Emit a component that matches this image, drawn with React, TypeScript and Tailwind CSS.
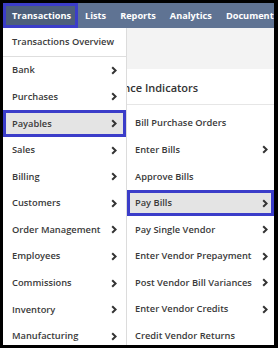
const leftItems = [
  { label: 'Bank', arrow: true },
  { label: 'Purchases', arrow: true },
  { label: 'Payables', arrow: true, active: true },
  { label: 'Sales', arrow: true },
  { label: 'Billing', arrow: true },
  { label: 'Customers', arrow: true },
  { label: 'Order Management', arrow: true },
  { label: 'Employees', arrow: true },
  { label: 'Commissions', arrow: true },
  { label: 'Inventory', arrow: true },
  { label: 'Manufacturing', arrow: true },
];

const subItems = [
  { label: 'Bill Purchase Orders', arrow: false },
  { label: 'Enter Bills', arrow: true },
  { label: 'Approve Bills', arrow: false },
  { label: 'Pay Bills', arrow: true, active: true },
  { label: 'Pay Single Vendor', arrow: true },
  { label: 'Enter Vendor Prepayment', arrow: true },
  { label: 'Post Vendor Bill Variances', arrow: true },
  { label: 'Enter Vendor Credits', arrow: true },
  { label: 'Credit Vendor Returns', arrow: false },
];

function Chevron() {
  return (
    <svg width="6" height="9" viewBox="0 0 6 9" className="shrink-0">
      <polyline points="1.2,1.2 4.6,4.5 1.2,7.8" fill="none" stroke="#333" strokeWidth="2" />
    </svg>
  );
}

type Item = { label: string; arrow: boolean; active?: boolean };

function Row({ item, padL, padR }: { item: Item; padL: number; padR: number }) {
  const active = !!item.active;
  return (
    <div
      className={
        active
          ? 'h-[26.6px] shrink-0 flex items-center justify-between border-[3px] border-[#3b3dc9] bg-[#e4e4e4]'
          : 'h-[26.6px] shrink-0 flex items-center justify-between'
      }
      style={{ paddingLeft: active ? padL - 3 : padL, paddingRight: active ? padR - 3 : padR }}
    >
      <span className="whitespace-nowrap">{item.label}</span>
      {item.arrow && <Chevron />}
    </div>
  );
}

export default function App() {
  return (
    <div className="w-[278px] h-[348px] bg-black pt-[3px] pl-[3px] pr-[4px] pb-[3px] flex flex-col font-['Open_Sans',sans-serif]">
      <div className="flex-1 flex flex-col overflow-hidden bg-[#f3f3f3]">
        <nav className="h-[25px] shrink-0 bg-[#5f7393] flex items-stretch text-[9.2px] font-bold text-white whitespace-nowrap overflow-hidden">
          <div className="w-[75px] shrink-0 border-[3px] border-[#3b3dc9] bg-[#4d5f7b] flex items-center pl-[6px]">Transactions</div>
          <div className="flex items-center pl-[7px] pr-[7px]">Lists</div>
          <div className="flex items-center px-[7px]">Reports</div>
          <div className="flex items-center px-[7px]">Analytics</div>
          <div className="flex items-center px-[7px]">Documents</div>
        </nav>

        <div className="flex-1 flex min-h-0 text-[9.3px] font-semibold text-[#3a3a3a]">
          <div className="w-[124px] shrink-0 bg-white border-r border-[#dcdcdc] flex flex-col">
            <div className="h-[29px] shrink-0 flex items-center pl-[9px] border-b border-[#dedede] whitespace-nowrap">
              Transactions Overview
            </div>
            {leftItems.map((item) => (
              <Row key={item.label} item={item} padL={9} padR={9} />
            ))}
          </div>

          <div className="flex-1 min-w-0 flex flex-col overflow-hidden">
            <div className="h-[41px] shrink-0 bg-[#f3f3f3]" />
            <div className="h-[36px] shrink-0 bg-white border-b border-[#e6e6e6] flex items-center pt-[3px] overflow-hidden">
              <span className="ml-[-76px] whitespace-nowrap text-[11px] font-semibold text-[#333]">Key Performance Indicators</span>
            </div>
            <div className="h-[5px] shrink-0 bg-white" />
            <div className="flex-1 bg-white border-l border-[#dcdcdc] ml-[-1px] flex flex-col">
              {subItems.map((item) => (
                <Row key={item.label} item={item} padL={8} padR={6} />
              ))}
            </div>
          </div>
        </div>
      </div>
    </div>
  );
}
